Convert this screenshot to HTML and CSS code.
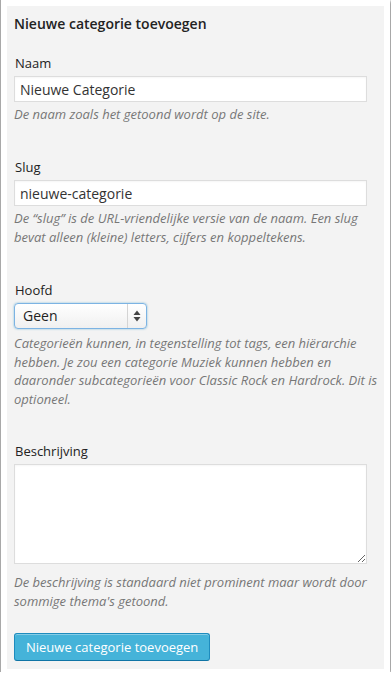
FILE: index.html
```html
<!DOCTYPE html>
<html lang="nl">
<head>
<meta charset="utf-8">
<title>Nieuwe categorie toevoegen</title>
<link rel="stylesheet" href="styles.css">
</head>
<body>
<div class="frame">
  <form class="panel">
    <h3 class="title">Nieuwe categorie toevoegen</h3>

    <div class="field">
      <label class="label" for="naam">Naam</label>
      <input class="text" id="naam" type="text" value="Nieuwe Categorie">
      <p class="desc">De naam zoals het getoond wordt op de site.</p>
    </div>

    <div class="field">
      <label class="label" for="slug">Slug</label>
      <input class="text" id="slug" type="text" value="nieuwe-categorie">
      <p class="desc">De “slug” is de URL-vriendelijke versie van de naam. Een slug bevat alleen (kleine) letters, cijfers en koppeltekens.</p>
    </div>

    <div class="field">
      <label class="label">Hoofd</label>
      <div class="select">
        <span class="select-value">Geen</span>
        <span class="select-arrows">
          <svg width="8" height="12" viewBox="0 0 8 12"><path d="M4 0.5 L7.5 5 H0.5 Z" fill="#444"/><path d="M4 11.5 L7.5 7 H0.5 Z" fill="#444"/></svg>
        </span>
      </div>
      <p class="desc desc-after-select">Categorieën kunnen, in tegenstelling tot tags, een hiërarchie hebben. Je zou een categorie Muziek kunnen hebben en daaronder subcategorieën voor Classic Rock en Hardrock. Dit is optioneel.</p>
    </div>

    <div class="field">
      <label class="label" for="beschrijving">Beschrijving</label>
      <textarea class="area" id="beschrijving"></textarea>
      <p class="desc desc-after-area">De beschrijving is standaard niet prominent maar wordt door sommige thema's getoond.</p>
    </div>

    <div class="actions">
      <button class="button" type="button">Nieuwe categorie toevoegen</button>
    </div>
  </form>
</div>
</body>
</html>
```

FILE: styles.css
```css
html, body {
  margin: 0;
  padding: 0;
  background: #fff;
}

body {
  font-family: "Open Sans", "Liberation Sans", sans-serif;
  color: #222;
  overflow: hidden;
}

.frame {
  width: 380px;
  height: 666px;
  margin-left: 1px;
  padding: 6px 3px 0 6px;
  background: #fff;
  box-shadow: -1px 0 1px #a8a8a8, 1px 1px 3px rgba(0, 0, 0, 0.55);
}

.panel {
  box-sizing: border-box;
  width: 377px;
  height: 663px;
  margin: 0;
  padding: 8px 2px 0 7px;
  background: #f3f3f3;
}

.title {
  margin: 0;
  font-size: 14px;
  font-weight: 600;
  line-height: 19px;
  color: #222;
}

.field {
  margin-top: 21px;
  margin-bottom: 0;
}

.field + .field {
  margin-top: 34px;
}

.label {
  display: block;
  margin: 0 0 3px 1px;
  font-size: 13px;
  line-height: 19px;
  color: #222;
}

.text {
  display: block;
  box-sizing: border-box;
  width: 353px;
  height: 26px;
  margin: 0;
  padding: 0 5px;
  border: 1px solid #ddd;
  background: #fff;
  box-shadow: inset 0 1px 2px rgba(0, 0, 0, 0.04);
  font-family: "Open Sans", "Liberation Sans", sans-serif;
  font-size: 14px;
  color: #333;
  outline: none;
}

.desc {
  margin: 3px 0 0 0;
  font-size: 13px;
  font-style: italic;
  line-height: 19px;
  color: #777;
}

.desc-after-select {
  margin-top: 5px;
  line-height: 18.5px;
}

.desc-after-area {
  margin-top: 9px;
}

.select {
  box-sizing: border-box;
  display: flex;
  align-items: stretch;
  width: 133px;
  height: 26px;
  border: 1px solid #7cb3e3;
  border-radius: 4px;
  background: linear-gradient(#ffffff, #f0f0f0);
  box-shadow: 0 0 2px rgba(30, 140, 190, 0.6);
}

.select-value {
  flex: 1;
  padding-left: 8px;
  font-size: 14px;
  line-height: 24px;
  color: #222;
}

.select-arrows {
  display: flex;
  align-items: center;
  justify-content: center;
  width: 18px;
  border-left: 1px solid #d4d4d4;
}

.area {
  display: block;
  box-sizing: border-box;
  width: 353px;
  height: 100px;
  margin: 0;
  border: 1px solid #ddd;
  background: #fff;
  box-shadow: inset 0 1px 2px rgba(0, 0, 0, 0.04);
  outline: none;
}

.actions {
  margin-top: 22px;
}

.button {
  box-sizing: border-box;
  height: 28px;
  padding: 0 11px;
  border: 1px solid #1e8cbe;
  border-bottom-color: #0f74a5;
  border-radius: 3px;
  background: #45b3d9;
  box-shadow: inset 0 1px 0 rgba(255, 255, 255, 0.35);
  font-family: "Open Sans", "Liberation Sans", sans-serif;
  font-size: 13px;
  line-height: 26px;
  color: #fff;
}
```
